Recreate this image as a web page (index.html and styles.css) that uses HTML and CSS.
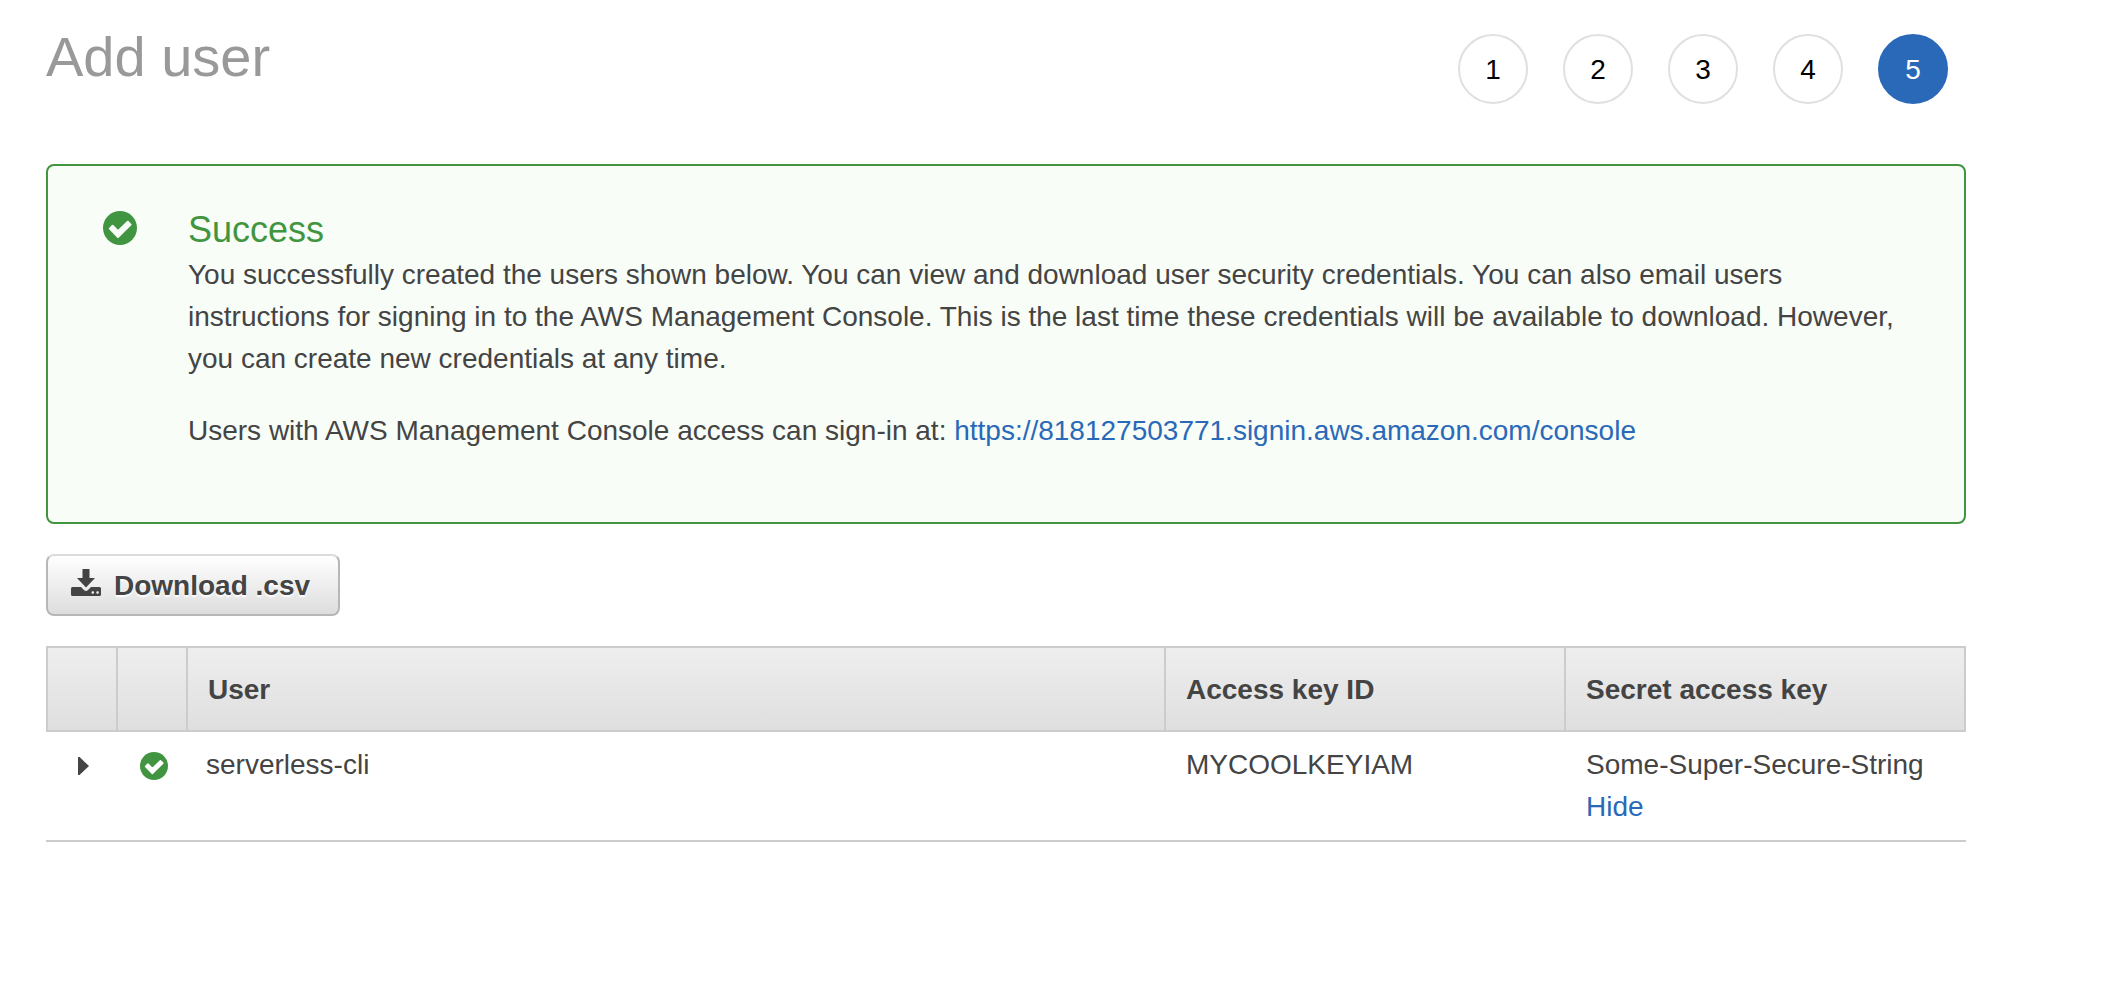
FILE: index.html
```html
<!DOCTYPE html>
<html lang="en">
<head>
<meta charset="utf-8">
<meta name="viewport" content="width=device-width, initial-scale=1">
<title>Add user</title>
<link rel="stylesheet" href="styles.css">
</head>
<body>
<main class="page">
  <header class="page-header">
    <h1 class="page-title">Add user</h1>
    <ol class="steps">
      <li class="step">1</li>
      <li class="step">2</li>
      <li class="step">3</li>
      <li class="step">4</li>
      <li class="step step-current" aria-current="step">5</li>
    </ol>
  </header>

  <section class="notice">
    <svg class="notice-icon" viewBox="0 0 34 34" aria-hidden="true">
      <circle cx="17" cy="17" r="17" fill="#429540"/>
      <path d="M6.800 17.600 L9.600 14.800 L15 20.200 L24.800 10.800 L27.600 13.600 L15 26 Z" fill="#f8fdf7" stroke="#f8fdf7" stroke-width="2" stroke-linejoin="round"/>
    </svg>
    <div class="notice-body">
      <h2 class="notice-title">Success</h2>
      <p class="notice-text">You successfully created the users shown below. You can view and download user security credentials. You can also email users instructions for signing in to the AWS Management Console. This is the last time these credentials will be available to download. However, you can create new credentials at any time.</p>
      <p class="notice-text">Users with AWS Management Console access can sign-in at: <a class="link" href="#console">https://818127503771.signin.aws.amazon.com/console</a></p>
    </div>
  </section>

  <button class="download" type="button">
    <svg class="download-icon" viewBox="0 0 30 28" aria-hidden="true">
      <path d="M1.500 18 H10 L13 21 Q15 22.800 17 21 L20 18 H28.500 Q30 18 30 19.500 V25.500 Q30 27 28.500 27 H1.500 Q0 27 0 25.500 V19.500 Q0 18 1.500 18 Z" fill="#444"/>
      <path d="M11.500 0 H18.500 V9 H24 L15 18.600 L6 9 H11.500 Z" fill="#444"/>
      <rect x="20.500" y="22.300" width="2.500" height="2.500" rx="1" fill="#eee"/>
      <rect x="25.300" y="22.300" width="2.500" height="2.500" rx="1" fill="#eee"/>
    </svg>
    <span>Download .csv</span>
  </button>

  <table class="users">
    <colgroup>
      <col class="col-icon">
      <col class="col-icon">
      <col>
      <col class="col-key">
      <col class="col-secret">
    </colgroup>
    <thead>
      <tr>
        <th aria-label="Details"></th>
        <th aria-label="Status"></th>
        <th scope="col">User</th>
        <th scope="col">Access key ID</th>
        <th scope="col">Secret access key</th>
      </tr>
    </thead>
    <tbody>
      <tr>
        <td class="cell-icon">
          <button class="expand" type="button" aria-label="Show details">
            <svg class="caret" viewBox="0 0 12 18" aria-hidden="true"><path d="M0 0 H1.500 L11 9 L1.500 18 H0 Z" fill="#444"/></svg>
          </button>
        </td>
        <td class="cell-icon">
          <svg class="status-icon" viewBox="0 0 34 34" role="img" aria-label="Created">
            <circle cx="17" cy="17" r="17" fill="#429540"/>
            <path d="M6.800 17.600 L9.600 14.800 L15 20.200 L24.800 10.800 L27.600 13.600 L15 26 Z" fill="#fff" stroke="#fff" stroke-width="2" stroke-linejoin="round"/>
          </svg>
        </td>
        <td class="cell-user">serverless-cli</td>
        <td>MYCOOLKEYIAM</td>
        <td>Some-Super-Secure-String<br><a class="link" href="#hide">Hide</a></td>
      </tr>
    </tbody>
  </table>
</main>
</body>
</html>
```

FILE: styles.css
```css
* {
  box-sizing: border-box;
}

body {
  margin: 0;
  background: #fff;
  color: #444;
  font: 28px/42px "Helvetica Neue", "Liberation Sans", Arial, sans-serif;
}

.page {
  padding: 24px 156px 24px 46px;
}

.page-header {
  display: flex;
  justify-content: space-between;
  align-items: flex-start;
  padding-right: 18px;
  margin-bottom: 60px;
}

.page-title {
  margin: 0;
  color: #999;
  font-size: 56px;
  font-weight: 400;
  line-height: 66px;
}

.steps {
  display: flex;
  gap: 35px;
  margin: 0;
  padding: 10px 0 0;
  list-style: none;
}

.step {
  display: flex;
  align-items: center;
  justify-content: center;
  width: 70px;
  height: 70px;
  padding-top: 2px;
  border: 2px solid #e0e0e0;
  border-radius: 50%;
  color: #000;
}

.step-current {
  border-color: #2a69b8;
  background: #2a69b8;
  color: #fff;
}

.notice {
  display: flex;
  align-items: flex-start;
  gap: 51px;
  margin-bottom: 30px;
  padding: 42px 48px 40px 55px;
  border: 2px solid #429540;
  border-radius: 8px;
  background: #f8fdf7;
}

.notice-icon {
  flex: none;
  width: 34px;
  height: 34px;
  margin-top: 3px;
}

.notice-title {
  margin: 0 0 2px;
  color: #429540;
  font-size: 36px;
  font-weight: 400;
  line-height: 44px;
}

.notice-text {
  margin: 0 0 30px;
}

.link {
  color: #2a69b8;
  text-decoration: none;
}

.download {
  display: flex;
  align-items: center;
  gap: 13px;
  height: 62px;
  margin-bottom: 30px;
  padding: 2px 28px 0 23px;
  border: 2px solid #b7b7b7;
  border-top-color: #dcdcdc;
  border-radius: 8px;
  background: linear-gradient(#fff, #ddd);
  color: #444;
  font: inherit;
  font-weight: 700;
  text-shadow: 0 2px 2px #fff;
}

.download-icon {
  width: 30px;
  height: 28px;
  margin-bottom: 6px;
}

.users {
  width: 100%;
  border-spacing: 0;
  table-layout: fixed;
}

.col-icon {
  width: 70px;
}

.col-key {
  width: 400px;
}

.col-secret {
  width: 402px;
}

.users th {
  padding: 21px 20px 19px;
  border: 2px solid #ccc;
  border-right: 0;
  background: linear-gradient(#eee, #dfdfdf);
  text-align: left;
}

.users th:last-child {
  border-right: 2px solid #ccc;
}

.users td {
  padding: 12px 0 12px 22px;
  border-bottom: 2px solid #ccc;
  vertical-align: top;
}

.users td.cell-user {
  padding-left: 20px;
}

.users td.cell-icon {
  padding-left: 4px;
}

.expand {
  display: flex;
  align-items: center;
  justify-content: center;
  width: 100%;
  height: 42px;
  padding: 2px 0 0 2px;
  border: 0;
  background: none;
}

.caret {
  width: 12px;
  height: 18px;
}

.status-icon {
  display: block;
  width: 28px;
  height: 28px;
  margin: 8px auto 0 20px;
}
```
